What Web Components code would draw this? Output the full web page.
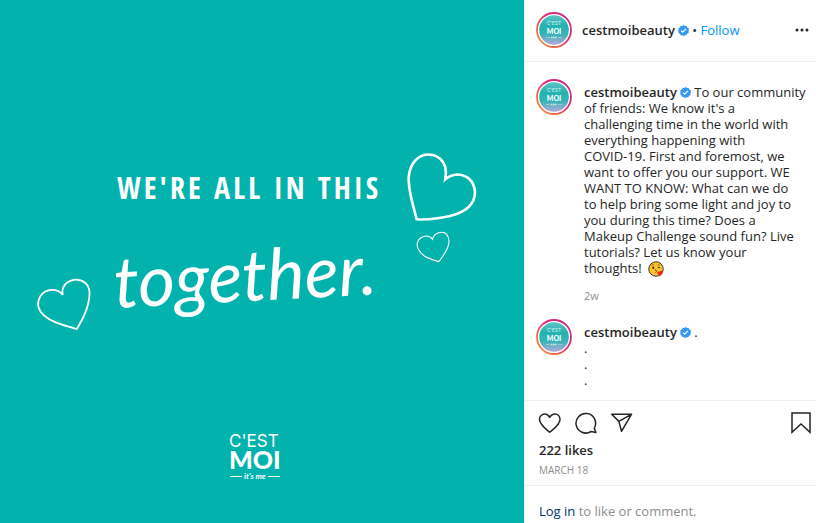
<!DOCTYPE html>
<html lang="en">
<head>
<meta charset="utf-8">
<meta name="viewport" content="width=device-width, initial-scale=1">
<title>cestmoibeauty</title>
<style>
html,body{height:100%}
body{margin:0;background:#fff;color:#262626;font:13px/16px "Open Sans","Noto Sans",sans-serif}
</style>
</head>
<body>
<post-page></post-page>
<script>
const define = (name, html) => {
  const template = document.createElement('template');
  template.innerHTML = html;
  customElements.define(name, class extends HTMLElement {
    constructor() {
      super();
      this.attachShadow({mode: 'open'}).append(template.content.cloneNode(true));
    }
  });
};

define('post-art', `
<style>
:host{display:block;background:#02b3ad;overflow:hidden}
svg{display:block;width:100%;height:100%}
.line{font:700 30px "Liberation Sans Narrow","Open Sans Condensed","DejaVu Sans Condensed",sans-serif;letter-spacing:3px}
.script{font:italic 400 71px Lato,sans-serif}
.brand{font:400 17px Inter,sans-serif}
.moi{font:900 25px Lato,sans-serif}
.tag{font:italic 700 8px Lato,sans-serif}
</style>
<svg viewBox="0 0 524 523" preserveAspectRatio="xMidYMid slice" fill="#fff" role="img" aria-label="We're all in this together">
<text class="line" x="117" y="199">WE'RE ALL IN THIS</text>
<text class="script" x="115" y="308" transform="rotate(-3 115 308)">together.</text>
<g fill="none" stroke="#fff" stroke-linejoin="miter">
<path stroke-width="1.8" d="M62.7 295C58 288 46 288 40.5 296C36 304 38 311 46 317C53 323 66 326 76.7 329C83 319 90 306 89.5 292C89 283 82 279.500 75 279.700C66 281 61 287 62.700 295Z"/>
<path stroke-width="2.600" d="M445.300 179.300C449 159 435 154.500 428 154.500C417 155 410 164 408.700 177C408 190 413 205 416.700 219.300C430 220 439 218.500 450 216C466 212 475 204 475 192C474 180 466 174.500 457 174.500C451 175 448 177 445.300 179.300Z"/>
<path stroke-width="1.100" d="M432.700 239.300C430 236 426 235.500 423 236.700C417 239 416 245 418.500 249.500C422 257 431 259 438.700 261.700C443 256 449 249 449 241.500C449 235 445 232 441.500 232.200C436 232.500 433 236 432.700 239.300Z"/>
<path stroke-width="1" d="M230 476.500H242M268 476.500H280"/>
</g>
<text class="brand" x="229" y="447">C'EST</text>
<text class="moi" x="229" y="469">MOI</text>
<text class="tag" x="244" y="479">it's me</text>
</svg>`);

define('user-avatar', `
<style>
:host{display:block;flex:none;width:36px;height:36px}
svg{display:block;width:100%;height:100%}
.a{font:400 5px Inter,sans-serif}
.b{font:900 7px Lato,sans-serif}
</style>
<svg viewBox="0 0 36 36" role="img" aria-label="C'est Moi">
<defs>
<linearGradient id="ring" x1="0" y1="1" x2="1" y2="0"><stop offset="0" stop-color="#f9a13a"/><stop offset=".3" stop-color="#f0604a"/><stop offset=".6" stop-color="#dc2b75"/><stop offset="1" stop-color="#c52e92"/></linearGradient>
<linearGradient id="fill" x1="0" y1="0" x2="0" y2="1"><stop offset="0" stop-color="#5fc3c5"/><stop offset=".35" stop-color="#22b3b0"/><stop offset=".65" stop-color="#37b5b7"/><stop offset="1" stop-color="#b9a8dc"/></linearGradient>
</defs>
<circle cx="18" cy="18" r="17" fill="#fff" stroke="url(#ring)" stroke-width="1.800"/>
<circle cx="18" cy="18" r="14.800" fill="url(#fill)"/>
<g fill="#fff" text-anchor="middle"><text class="a" x="18" y="13" opacity=".8">C'EST</text><text class="b" x="18" y="22">MOI</text></g>
<path d="M10 25.500h4M22 25.500h4" stroke="#fff" stroke-width=".6" opacity=".6"/><path d="M15 25.500h6" stroke="#fff" stroke-width="1.400" stroke-dasharray="1.500 .5" opacity=".75"/>
</svg>`);

define('user-name', `
<style>
:host{display:inline}
a{color:inherit;text-decoration:none;font-weight:600}
svg{width:11px;height:11px;vertical-align:-1px;margin-left:3px}
</style>
<a href="#"><slot></slot></a><svg viewBox="0 0 24 24" role="img" aria-label="Verified"><path fill="#3897f0" d="M12 0l3 2.300 3.700-.400 1.500 3.500 3.500 1.500-.500 3.700L24 12l-1.300 2.200.500 3.200-3.400 1.800-1.600 3.400-3.500-.500L12 24l-2.800-1.900-3.500.500-1.500-3.400-3.400-1.800.500-3.200L0 12l1.300-1.900-.500-3.300 3.400-1.500 1.500-3.400 3.500.400z"/><path fill="none" stroke="#fff" stroke-width="2.500" d="M6.800 12.300l3.500 3.500 7-7.500"/></svg>`);

define('post-header', `
<style>
:host{display:flex;align-items:center;gap:10px;padding:12px 6px 13px 11px;border-bottom:1px solid #efefef}
.who{flex:1}
button{border:0;background:none;padding:0;font:inherit;cursor:pointer}
.follow{color:#0095f6;font-weight:500}
.more{display:flex;width:16px;height:16px}
</style>
<user-avatar></user-avatar>
<div class="who"><user-name>cestmoibeauty</user-name> • <button class="follow">Follow</button></div>
<button class="more" aria-label="More options"><svg width="16" height="16" fill="#262626"><circle cx="3" cy="8" r="1.500"/><circle cx="8" cy="8" r="1.500"/><circle cx="13" cy="8" r="1.500"/></svg></button>`);

define('post-comment', `
<style>
:host{display:flex;align-items:flex-start;gap:12px}
.body{flex:1;min-width:0;padding-top:5px}
p{margin:0}
</style>
<user-avatar></user-avatar>
<div class="body"><p><user-name>cestmoibeauty</user-name> <slot></slot></p><slot name="meta"></slot></div>`);

define('kiss-emoji', `
<style>:host{display:inline-block;width:16px;height:16px;vertical-align:-4px;margin-left:3px}svg{display:block}</style>
<svg width="16" height="16" viewBox="0 0 16 16" role="img" aria-label="Face blowing a kiss"><circle cx="8" cy="8" r="7.200" fill="#fdc62f" stroke="#3b3022"/><path d="M3.500 4.500q1.300-1.300 2.600-.600M9.500 4.200q1.500-.700 2.700.300" stroke="#6b3c12" fill="none" stroke-width=".7"/><ellipse cx="5.300" cy="6.700" rx=".9" ry="1.200" fill="#3b2412"/><path d="M9.600 6.800q1.300-1 2.600.200" stroke="#3b2412" fill="none"/><path d="M7 8.600q2 .1.900 1.300 1.400.7-.500 1.700" stroke="#6b2412" fill="none" stroke-width=".8"/><path d="M12 15.200L9.400 12.500C8.700 11 10.200 9.700 11.600 10.800 12.800 9 15 9.800 14.900 11.600 14.700 13 13.200 13.900 12 15.200Z" fill="#e8291c"/></svg>`);

define('post-actions', `
<style>
:host{display:block;border-top:1px solid #efefef;padding:10px 3px 7px 13px}
.row{display:flex;gap:12px;align-items:center}
button{display:flex;padding:0;border:0;background:none;cursor:pointer}
.save{margin-left:auto}
svg{display:block;fill:none;stroke:#262626;stroke-width:1.500;stroke-linejoin:round;stroke-linecap:round}
.likes{margin-top:7px;font-weight:600;padding-left:1px}
time{display:block;margin-top:4px;padding-left:1px;font-size:10px;color:#8e8e8e}
</style>
<div class="row">
<button aria-label="Like"><svg width="24" height="24"><path d="M11.700 21.300C8 18 2 14 1.500 8.600 1.400 5.200 4 3 6.700 3 9.300 3 10.700 4.500 11.700 6.300 12.800 4.500 14.200 3 16.800 3 19.600 3 22 5.200 22 8.600 21.600 14 15.500 18 11.700 21.300Z"/></svg></button>
<button aria-label="Comment"><svg width="24" height="24"><path d="M20.200 17.300A9.800 9.800 0 1 0 17.100 20.500L21.900 21.600Z"/></svg></button>
<button aria-label="Share"><svg width="24" height="24"><path d="M1.700 3.200H21.600L11.500 20.300 8.900 10.400ZM8.900 10.400L21.600 3.200"/></svg></button>
<button class="save" aria-label="Save"><svg width="24" height="24"><path stroke-linejoin="miter" d="M3 2H21V21.200L12 13 3 21.200Z"/></svg></button>
</div>
<div class="likes">222 likes</div>
<time datetime="2020-03-18">MARCH 18</time>`);

define('post-login', `
<style>
:host{display:block;border-top:1px solid #efefef;padding:17px 14px 4px;color:#8e8e8e}
a{color:#003569;text-decoration:none}
</style>
<a href="#">Log in</a> to like or comment.`);

define('post-page', `
<style>
:host{display:grid;grid-template-columns:minmax(0,1fr) minmax(200px,292px);min-height:100%}
aside{display:flex;flex-direction:column;border-left:1px solid #efefef;min-width:0}
.comments{flex:1;display:flex;flex-direction:column;gap:15px;padding:17px 8px 11px 11px}
small{display:block;margin-top:11px;font-size:11px;color:#8e8e8e}
</style>
<post-art></post-art>
<aside>
<post-header></post-header>
<div class="comments">
<post-comment>To our community<br>of friends: We know it's a<br>challenging time in the world with<br>everything happening with<br>COVID-19. First and foremost, we<br>want to offer you our support. WE<br>WANT TO KNOW: What can we do<br>to help bring some light and joy to<br>you during this time? Does a<br>Makeup Challenge sound fun? Live<br>tutorials? Let us know your<br>thoughts! <kiss-emoji></kiss-emoji><small slot="meta">2w</small></post-comment>
<post-comment>.<br>.<br>.<br>.</post-comment>
</div>
<post-actions></post-actions>
<post-login></post-login>
</aside>`);
</script>
</body>
</html>
